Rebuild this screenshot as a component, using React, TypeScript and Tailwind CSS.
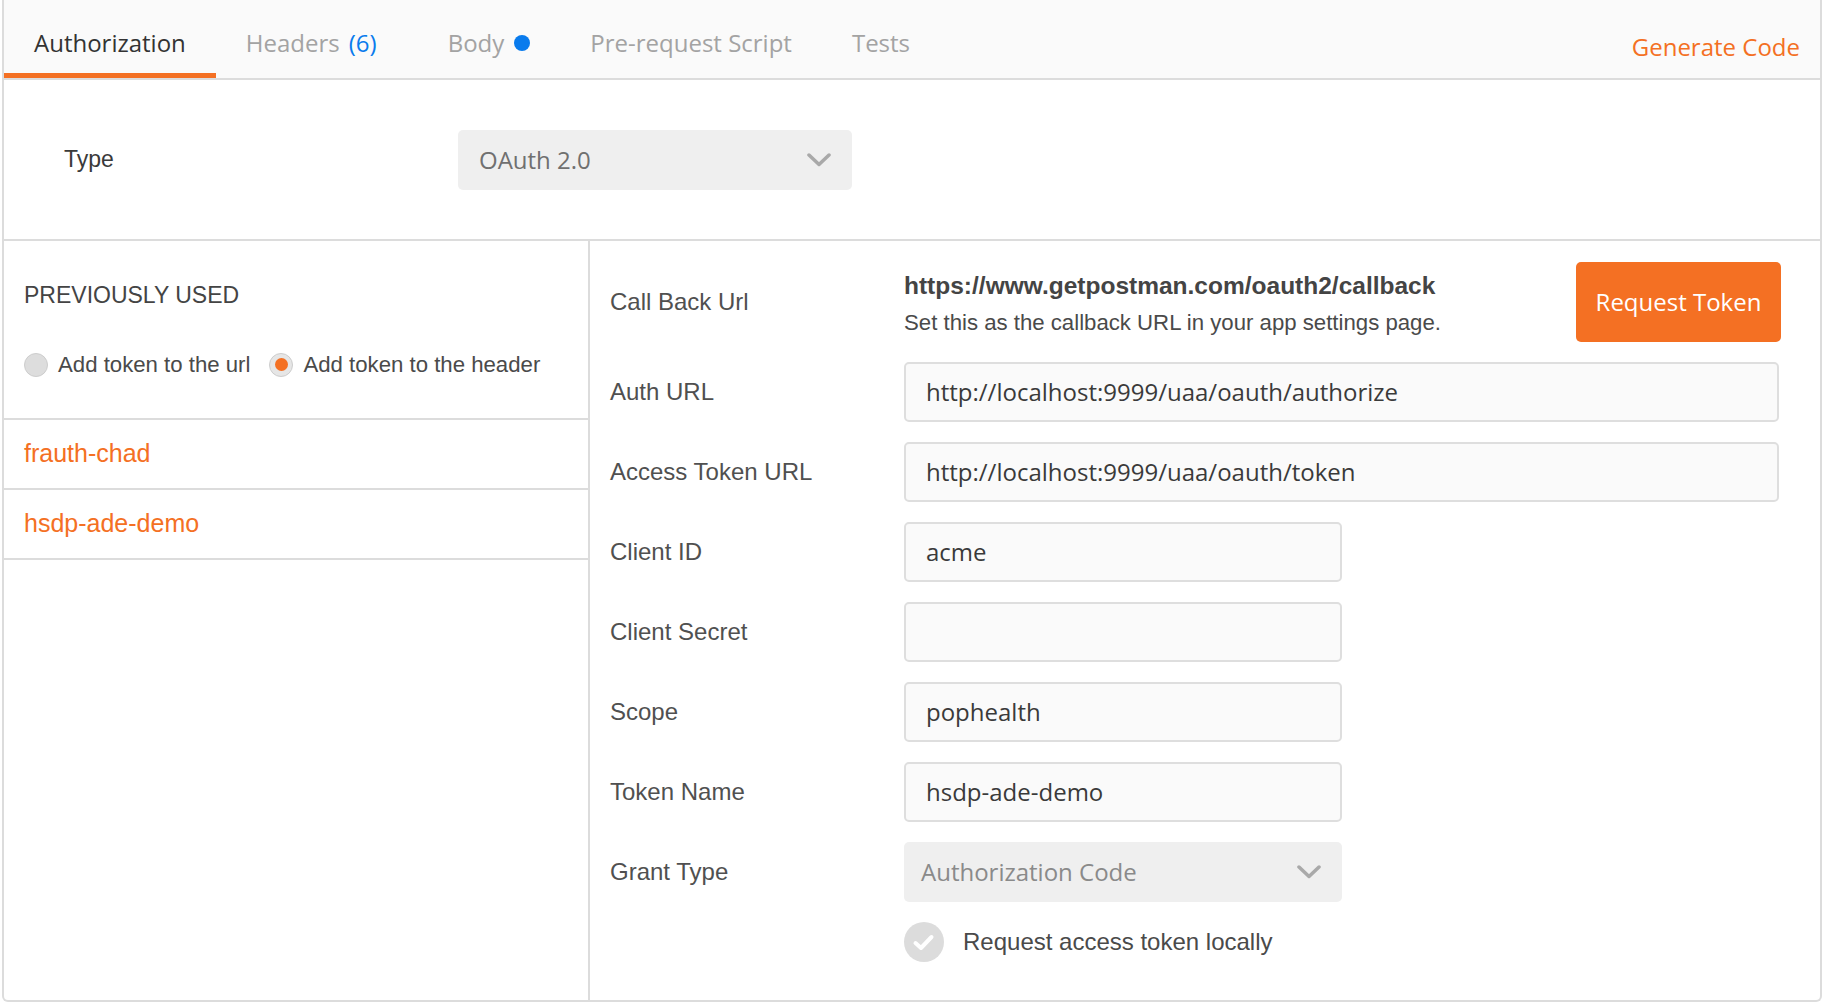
import React from 'react';

const ORANGE = 'text-[#f47023]';

const tabs = [
  { name: 'Authorization', active: true },
  { name: 'Headers', count: '(6)' },
  { name: 'Body', dot: true },
  { name: 'Pre-request Script' },
  { name: 'Tests' },
];

const Chevron: React.FC = () => (
  <svg width="24" height="14" viewBox="0 0 24 14" fill="none">
    <polyline points="2,2 12,11.5 22,2" stroke="#a9a9a9" strokeWidth="3.5" strokeLinecap="round" strokeLinejoin="round" />
  </svg>
);

const Label: React.FC<{ children: React.ReactNode }> = ({ children }) => (
  <div className="w-[294px] shrink-0 text-[24px] text-[#505050] font-['Liberation_Sans',Arial,sans-serif]">{children}</div>
);

const Field: React.FC<{ label: string; value?: string; wide?: boolean }> = ({ label, value, wide }) => (
  <div className="mt-[20px] h-[60px] flex items-center">
    <Label>{label}</Label>
    <div
      className={`${wide ? 'w-[875px]' : 'w-[438px]'} h-[60px] bg-[#fafafa] border-2 border-[#dedede] rounded-[5px] pl-[20px] flex items-center text-[24px] text-[#3a3a3a] font-['Open_Sans',sans-serif]`}
    >
      {value}
    </div>
  </div>
);

export default function App() {
  return (
    <div className="w-[1826px] h-[1002px] bg-white overflow-hidden">
      <div className="ml-[2px] w-[1820px] h-[1002px] border-x-2 border-b-2 border-[#dcdcdc] rounded-b-[6px] flex flex-col overflow-hidden">
        {/* Tab bar */}
        <div className="h-[80px] shrink-0 bg-[#fafafa] border-b-2 border-[#dcdcdc] flex font-['Open_Sans',sans-serif] text-[24px] leading-[33px]">
          {tabs.map((t) => (
            <div key={t.name} className={`relative pl-[30px] ${t.count ? 'pr-[41px]' : 'pr-[30px]'} pt-[26px] flex items-start`}>
              <span className={t.active ? 'text-[#333333]' : 'text-[#a3a3a3]'}>{t.name}</span>
              {t.count && <span className="ml-[9px] text-[#097bed]">{t.count}</span>}
              {t.dot && <span className="ml-[10px] mt-[9px] w-[16px] h-[16px] rounded-full bg-[#097bed]" />}
              {t.active && <div className="absolute left-0 right-0 bottom-0 h-[5px] bg-[#f47023]" />}
            </div>
          ))}
          <div className={`ml-auto pr-[20px] pt-[30px] ${ORANGE}`}>Generate Code</div>
        </div>

        {/* Type */}
        <div className="h-[161px] shrink-0 border-b-2 border-[#dcdcdc] flex items-center">
          <div className="w-[454px] pl-[60px] text-[23px] text-[#3a3a3a] font-['Liberation_Sans',Arial,sans-serif]">Type</div>
          <div className="w-[394px] h-[60px] bg-[#efefef] rounded-[5px] pl-[21px] pr-[21px] flex items-center justify-between font-['Open_Sans',sans-serif] text-[24px] text-[#707070]">
            <span>OAuth 2.0</span>
            <Chevron />
          </div>
        </div>

        <div className="flex flex-1">
          {/* Previously used */}
          <div className="w-[586px] shrink-0 border-r-2 border-[#dcdcdc] font-['Liberation_Sans',Arial,sans-serif]">
            <div className="h-[179px] border-b-2 border-[#dcdcdc] pl-[20px] pt-[41px]">
              <div className="text-[23px] leading-[26px] text-[#444444]">PREVIOUSLY USED</div>
              <div className="mt-[40px] flex items-center text-[22.2px] text-[#4a4a4a]">
                <span className="w-[24px] h-[24px] rounded-full bg-[#dddddd] border border-[#cdcdcd]" />
                <span className="ml-[10px]">Add token to the url</span>
                <span className="ml-[19px] w-[24px] h-[24px] rounded-full bg-[#e6e6e6] border border-[#cdcdcd] flex items-center justify-center">
                  <span className="w-[13px] h-[13px] rounded-full bg-[#f47023]" />
                </span>
                <span className="ml-[10px]">Add token to the header</span>
              </div>
            </div>
            {['frauth-chad', 'hsdp-ade-demo'].map((n) => (
              <div key={n} className={`h-[70px] border-b-2 border-[#dcdcdc] pl-[20px] flex items-center text-[25px] ${ORANGE}`}>
                {n}
              </div>
            ))}
          </div>

          {/* OAuth form */}
          <div className="flex-1 pl-[20px] pr-[39px] pt-[21px]">
            <div className="h-[80px] flex items-center">
              <Label>Call Back Url</Label>
              <div className="flex-1 flex justify-between items-center">
                <div className="font-['Liberation_Sans',Arial,sans-serif] pt-[2px]">
                  <div className="text-[24.5px] leading-[30px] font-bold text-[#444444]">https://www.getpostman.com/oauth2/callback</div>
                  <div className="mt-[9px] text-[22.2px] leading-[26px] text-[#4a4a4a]">Set this as the callback URL in your app settings page.</div>
                </div>
                <button className="w-[205px] h-[80px] rounded-[5px] bg-[#f47023] text-white text-[24px] font-['Open_Sans',sans-serif]">
                  Request Token
                </button>
              </div>
            </div>
            <Field label="Auth URL" value="http://localhost:9999/uaa/oauth/authorize" wide />
            <Field label="Access Token URL" value="http://localhost:9999/uaa/oauth/token" wide />
            <Field label="Client ID" value="acme" />
            <Field label="Client Secret" />
            <Field label="Scope" value="pophealth" />
            <Field label="Token Name" value="hsdp-ade-demo" />
            <div className="mt-[20px] h-[60px] flex items-center">
              <Label>Grant Type</Label>
              <div className="w-[438px] h-[60px] bg-[#efefef] rounded-[5px] pl-[17px] pr-[21px] flex items-center justify-between font-['Open_Sans',sans-serif] text-[24px] text-[#8a8a8a]">
                <span>Authorization Code</span>
                <Chevron />
              </div>
            </div>
            <div className="mt-[20px] flex items-center pl-[294px]">
              <span className="w-[40px] h-[40px] rounded-full bg-[#dcdcdc] flex items-center justify-center">
                <svg width="40" height="40" viewBox="0 0 40 40" fill="none">
                  <polyline points="11.5,21 17,26 27.5,15" stroke="white" strokeWidth="4" strokeLinecap="round" strokeLinejoin="round" />
                </svg>
              </span>
              <span className="ml-[19px] text-[24px] text-[#4a4a4a] font-['Liberation_Sans',Arial,sans-serif]">Request access token locally</span>
            </div>
          </div>
        </div>
      </div>
    </div>
  );
}
